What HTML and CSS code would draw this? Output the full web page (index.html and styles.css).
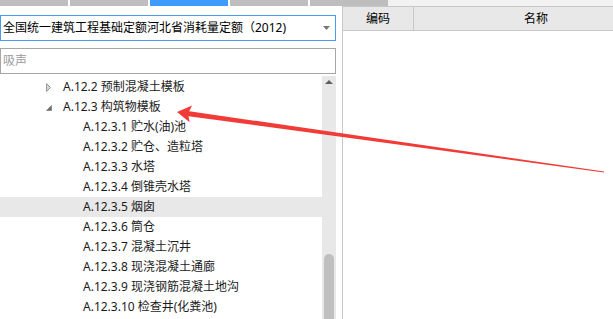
FILE: index.html
```html
<!DOCTYPE html>
<html lang="zh">
<head>
<meta charset="utf-8">
<title>定额</title>
<link rel="stylesheet" href="styles.css">
</head>
<body>
<div class="app">
  <div class="tabs">
    <div class="tab tab-first"></div>
    <div class="tab"></div>
    <div class="tab tab-active"></div>
    <div class="tab"></div>
    <div class="tab tab-last"></div>
    <div class="tab-fill"></div>
  </div>
  <div class="main">
    <div class="left">
      <div class="select">
        <span class="select-text">全国统一建筑工程基础定额河北省消耗量定额（2012)</span>
        <svg class="caret" width="7" height="4" viewBox="0 0 7 4"><path d="M0 0H7L3.5 4Z" fill="#777"/></svg>
      </div>
      <div class="search"><span class="placeholder">吸声</span></div>
      <div class="tree-wrap">
        <div class="tree">
          <div class="row lvl1">
            <span class="toggle"><svg width="5" height="9" viewBox="0 0 5 9"><path d="M0.5 0.5L4.5 4.5L0.5 8.5Z" fill="#d4d4d4" stroke="#9c9c9c" stroke-width="1"/></svg></span>
            <span class="label">A.12.2 预制混凝土模板</span>
          </div>
          <div class="row lvl1">
            <span class="toggle"><svg width="6" height="6" viewBox="0 0 6 6"><path d="M5.5 0.5V5.5H0.5Z" fill="#6e6e6e" stroke="#6e6e6e" stroke-width="0.6"/></svg></span>
            <span class="label">A.12.3 构筑物模板</span>
          </div>
          <div class="row lvl2"><span class="label">A.12.3.1 贮水(油)池</span></div>
          <div class="row lvl2"><span class="label">A.12.3.2 贮仓、造粒塔</span></div>
          <div class="row lvl2"><span class="label">A.12.3.3 水塔</span></div>
          <div class="row lvl2"><span class="label">A.12.3.4 倒锥壳水塔</span></div>
          <div class="row lvl2 row-hover"><span class="label">A.12.3.5 烟囱</span></div>
          <div class="row lvl2"><span class="label">A.12.3.6 筒仓</span></div>
          <div class="row lvl2"><span class="label">A.12.3.7 混凝土沉井</span></div>
          <div class="row lvl2"><span class="label">A.12.3.8 现浇混凝土通廊</span></div>
          <div class="row lvl2"><span class="label">A.12.3.9 现浇钢筋混凝土地沟</span></div>
          <div class="row lvl2"><span class="label">A.12.3.10 检查井(化粪池)</span></div>
        </div>
        <div class="scrollbar">
          <div class="sb-up"><svg width="8" height="4" viewBox="0 0 8 4"><path d="M0 4L4 0L8 4Z" fill="#606060"/></svg></div>
          <div class="sb-space"></div>
          <div class="sb-thumb"></div>
        </div>
      </div>
    </div>
    <div class="right">
      <div class="grid-head">
        <div class="col col-code">编码</div>
        <div class="col col-name">名称</div>
      </div>
      <div class="grid-body"></div>
    </div>
  </div>
  <svg class="annot" width="613" height="319" viewBox="0 0 613 319">
    <polygon points="177,112 192.04,105.53 189.23,111.19 604.07,171.5 603.93,172.5 188.53,116.15 189.68,122.37" fill="#f03b37"/>
  </svg>
</div>
</body>
</html>
```

FILE: styles.css
```css
* { box-sizing: border-box; }
html, body { margin: 0; padding: 0; background: #fff; }
body {
  width: 613px;
  height: 319px;
  overflow: hidden;
  font-family: "Noto Sans", "Noto Sans CJK SC", sans-serif;
  font-size: 12px;
  color: #1b1b1b;
}
.app {
  position: relative;
  width: 613px;
  height: 319px;
  display: flex;
  flex-direction: column;
}
.tabs {
  display: flex;
  height: 6px;
  flex: none;
}
.tab {
  width: 78px;
  background: #bebebe;
  margin-right: 2px;
}
.tab-first { width: 68px; }
.tab-last { margin-right: 0; }
.tab-active { background: #3f9bff; }
.tab-fill { flex: 1; background: #f2f2f2; }

.main {
  flex: 1;
  display: flex;
  min-height: 0;
}
.left {
  width: 342px;
  flex: none;
  padding-top: 9px;
  display: flex;
  flex-direction: column;
}
.select {
  width: 336px;
  height: 26px;
  border: 1px solid #4a9bf0;
  display: flex;
  align-items: center;
  padding-left: 2px;
  padding-right: 5px;
}
.select-text {
  flex: 1;
  color: #000;
  line-height: 24px;
  white-space: nowrap;
}
.caret { display: block; }
.search {
  width: 336px;
  height: 26px;
  margin-top: 7px;
  border: 1px solid #a6a6a6;
  display: flex;
  align-items: center;
  padding-left: 2px;
}
.placeholder { color: #9a9a9a; line-height: 24px; }

.tree-wrap {
  margin-top: 2px;
  flex: 1;
  display: flex;
  width: 336px;
  min-height: 0;
}
.tree {
  width: 322px;
  padding-top: 1px;
}
.row {
  height: 20px;
  display: flex;
  align-items: center;
  white-space: nowrap;
}
.label { line-height: 20px; color: #1b1b1b; }
.lvl1 { padding-left: 46px; }
.lvl2 { padding-left: 83px; }
.toggle {
  width: 17px;
  height: 20px;
  display: flex;
  align-items: center;
  padding-top: 1px;
}
.toggle svg { display: block; }
.row-hover { background: #e8e8e8; }

.scrollbar {
  width: 14px;
  background: #e8e8e8;
  display: flex;
  flex-direction: column;
  align-items: center;
}
.sb-up {
  height: 14px;
  width: 14px;
  display: flex;
  justify-content: center;
  align-items: center;
  padding-bottom: 2px;
}
.sb-up svg { display: block; }
.sb-space { height: 164px; flex: none; }
.sb-thumb {
  flex: 1;
  width: 10px;
  background: #bfbfbf;
  border-radius: 5px 5px 0 0;
}

.right {
  flex: 1;
  border-left: 1px solid #c8c8c8;
  border-top: 1px solid #c8c8c8;
  overflow: hidden;
  display: flex;
  flex-direction: column;
}
.grid-head {
  display: flex;
  height: 24px;
  flex: none;
  background: #e8e8e8;
  border-bottom: 1px solid #c8c8c8;
}
.col {
  flex: none;
  text-align: center;
  line-height: 24px;
  color: #000;
}
.col-code { width: 71px; border-right: 1px solid #c8c8c8; }
.col-name { width: 244px; }
.grid-body { flex: 1; background: #fff; }

.annot {
  position: absolute;
  left: 0;
  top: 0;
  pointer-events: none;
}
```
